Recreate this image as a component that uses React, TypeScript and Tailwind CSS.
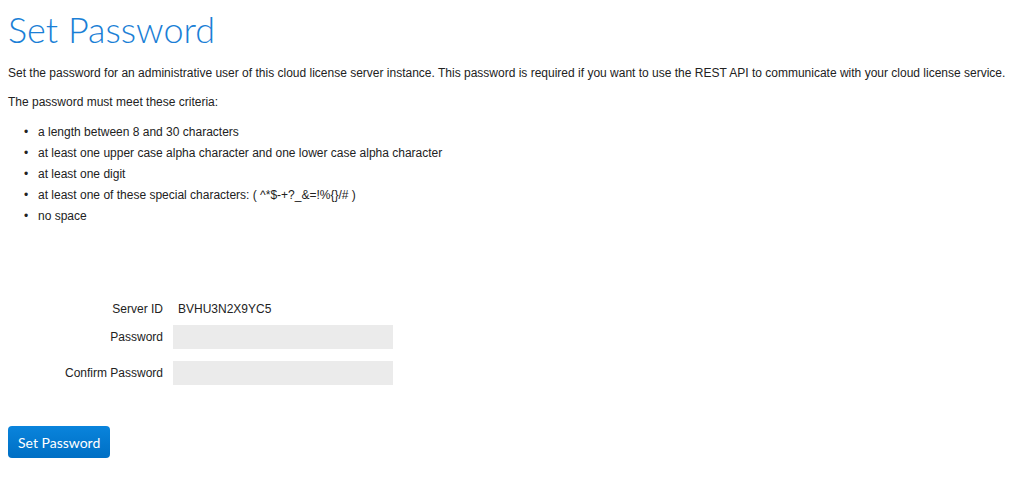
export default function App() {
  const criteria = [
    "a length between 8 and 30 characters",
    "at least one upper case alpha character and one lower case alpha character",
    "at least one digit",
    "at least one of these special characters: ( ^*$-+?_&=!%{}/# )",
    "no space",
  ];

  return (
    <div className="min-h-screen bg-white px-2 text-[12px] text-[#222] [font-family:'Liberation_Sans',Arial,sans-serif]">
      <h1 className="pt-[5px] text-[36px] leading-[48px] font-light text-[#1b7fd6] [font-family:Lato,sans-serif]">
        Set Password
      </h1>
      <p className="mt-[12px] leading-[16px]">
        Set the password for an administrative user of this cloud license server instance. This password is required if you want to use the REST API to communicate with your cloud license service.
      </p>
      <p className="mt-[13px] leading-[16px]">The password must meet these criteria:</p>
      <ul className="mt-[14px] flex flex-col gap-[5px] pl-[16px]">
        {criteria.map((c) => (
          <li key={c} className="flex leading-[16px]">
            <span className="w-[14px]">•</span>
            <span>{c}</span>
          </li>
        ))}
      </ul>

      {/* 폼 영역 */}
      <div className="mt-[77px] flex flex-col">
        <div className="flex h-[16px] items-center gap-[10px] leading-[16px]">
          <span className="w-[155px] text-right">Server ID</span>
          <span className="pl-[5px]">BVHU3N2X9YC5</span>
        </div>
        <div className="mt-[8px] flex items-center gap-[10px]">
          <label className="w-[155px] text-right leading-[16px]">Password</label>
          <input type="password" className="h-[24px] w-[220px] bg-[#ebebeb] outline-none" />
        </div>
        <div className="mt-[12px] flex items-center gap-[10px]">
          <label className="w-[155px] text-right leading-[16px]">Confirm Password</label>
          <input type="password" className="h-[24px] w-[220px] bg-[#ebebeb] outline-none" />
        </div>
      </div>

      <button className="mt-[41px] h-[32px] rounded-[4px] bg-gradient-to-b from-[#0a84dc] to-[#006fc4] px-[10px] text-[14px] text-white [font-family:Lato,sans-serif]">
        Set Password
      </button>
    </div>
  );
}
